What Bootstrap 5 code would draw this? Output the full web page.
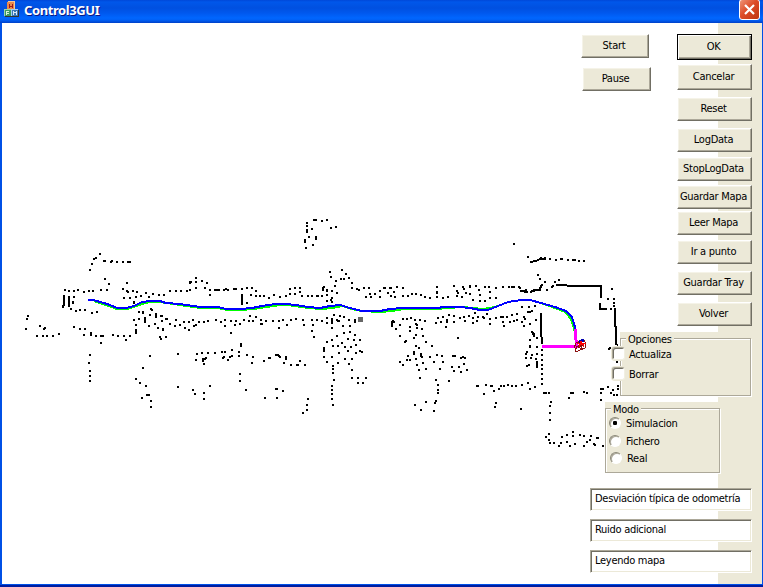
<!DOCTYPE html>
<html lang="es">
<head>
<meta charset="utf-8">
<meta name="viewport" content="width=device-width, initial-scale=1">
<title>Control3GUI</title>
<link href="https://cdn.jsdelivr.net/npm/bootstrap@5.3.0/dist/css/bootstrap.min.css" rel="stylesheet">
<style>
  html, body { height: 100%; overflow: hidden; }
  body { font: 11px/13px "DejaVu Sans Condensed", Tahoma, "DejaVu Sans", sans-serif; font-stretch: condensed; letter-spacing: -.27px; color: #000; }
  .win { width: 763px; height: 587px; background: #0050e6; }
  .titlebar { height: 23px; padding: 0 3px 0 4px; background: linear-gradient(#0048d8 0, #0057ea 2px, #0050e0 8px, #0058ee 13px, #0066ff 18px, #0060f6 20px, #0040c8 23px); }
  .titlebar .caption { font: bold 13px/20px "Noto Sans", "Open Sans", sans-serif; letter-spacing: -.4px; color: #fff; text-shadow: 1px 1px #0a1883; margin-left: 5px; }
  .app-icon { margin-top: 1px; }
  .close-btn { width: 21px; height: 21px; border: 1px solid #fff; border-radius: 3px; background: linear-gradient(135deg, #ee9377, #dd4c28 45%, #bf3511); padding: 0; margin-top: -1px; }
  .client { height: 561px; margin: 0 1px 0 2px; background: linear-gradient(90deg, #fff 716px, #ece9d8 716px); }
  .frame-foot { height: 3px; background: linear-gradient(#0050e6 33%, #001ea0 34%); }
  .map { left: -2px; top: -23px; pointer-events: none; }
  .controls { padding: 11px 10px 0 0; }
  .btn-xp { display: block; height: 24px; padding: 0 2px 1px 0; border: 1px solid; border-color: #fff #716f64 #716f64 #fff; border-radius: 0; background: #ece9d8; box-shadow: inset -1px -1px #aca899, inset 1px 1px #f5f3e8; font: inherit; letter-spacing: inherit; color: #000; white-space: nowrap; line-height: 20px; }
  .btn-xp:hover { background: #ece9d8; border-color: #fff #716f64 #716f64 #fff; color: #000; }
  .side { width: 75px; }
  .side .btn-xp { line-height: 22px; padding-bottom: 0; }
  .side .tall { height: 26px; line-height: 24px; }
  .side .btn-default { height: 26px; line-height: 24px; border-color: #000; box-shadow: inset 1px 1px #fff, inset -1px -1px #716f64, inset -2px -2px #aca899; }
  .left-col { width: 70px; margin-right: 26px; }
  .group-xp { background: #ece9d8; padding-top: 6px; }
  .group-xp > fieldset { border: 1px solid #aca899; box-shadow: 1px 1px #fff, inset 1px 1px #fff; padding: 0; margin: 0; min-width: 0; }
  .group-xp .ttl { background: #ece9d8; padding: 0 2px; margin-top: -6px; width: max-content; height: 13px; position: relative; }
  .opc { width: 131px; margin: 6px 1px 0 0; }
  .opc > fieldset { height: 58px; }
  .modo { width: 115px; margin: 6px 32px 0 0; }
  .modo > fieldset { height: 65px; }
  .check-xp { width: 13px; height: 13px; margin: -1px 0 1px; border: 1px solid; border-color: #aca899 #f1efe2 #f1efe2 #aca899; border-radius: 0; box-shadow: inset 1px 1px #716f64, 0 0 0 1px #ece9d8; background: #fff; flex: none; }
  .radio-xp { width: 12px; height: 12px; margin: -2px 1px 0 -1px; border: 1px solid; border-color: #8b8878 #fff #fff #8b8878; border-radius: 50%; background: #fff; flex: none; box-shadow: inset 1px 1px #aca899; }
  .radio-xp:checked { border-color: #8b8878 #fff #fff #8b8878; background: radial-gradient(circle, #000 2px, #fff 2.4px); }
  .edit-xp { width: 162px; height: 23px; padding: 0 0 3px 4px; border: 1px solid; border-color: #aca899 #fff #fff #aca899; border-radius: 0; box-shadow: inset 1px 1px #716f64, inset -1px -1px #ece9d8; background: #fff; font: inherit; letter-spacing: -.29px; color: #000; }
</style>
<script src="https://cdn.jsdelivr.net/npm/bootstrap@5.3.0/dist/js/bootstrap.bundle.min.js"></script>
</head>
<body>
<div class="win d-flex flex-column">
  <header class="titlebar d-flex align-items-start">
    <svg width="15" height="16" viewBox="0 0 15 16" class="app-icon" shape-rendering="crispEdges">
      <path d="M3 1h7v8H3z" fill="#e8894a"/><path d="M4 0h7v1H4zM10 1h1v7h-1z" fill="#f8c898"/>
      <path d="M5 3h1v4H5zM8 3h1v4H8zM6 4.500h2v1H6z" fill="#a01818"/>
      <path d="M0 8h7v7H0z" fill="#3d9a62"/><path d="M0 8h7v1H0zM0 8h1v7H0z" fill="#9cd4a8"/><path d="M2 10h3v1H3v1h2v1H3v1H2z" fill="#d8f0dc"/>
      <path d="M7 8h7v7H7z" fill="#3b78b8"/><path d="M7 8h7v1H7zM7 8h1v7H7z" fill="#a8cff0"/><path d="M9 10h1v4H9zM12 10h1v4h-1zM10 11h2v1h-2z" fill="#d8e8f8"/>
      <path d="M14 9h1v6h-1zM1 15h14v1H1z" fill="#333"/>
    </svg>
    <span class="caption">Control3GUI</span>
    <button class="close-btn ms-auto d-flex align-items-center justify-content-center" aria-label="Cerrar">
      <svg width="13" height="13" viewBox="0 0 13 13"><path d="M2 2l9 9M11 2l-9 9" stroke="#fff" stroke-width="2.200"/></svg>
    </button>
  </header>

  <main class="client position-relative">
    <svg class="map position-absolute" width="720" height="584" viewBox="0 0 720 584" shape-rendering="crispEdges" fill="none">
      <path id="dots" stroke="#000" stroke-width="2" stroke-linecap="square"/>
      <g stroke="#000" stroke-width="2">
        <path d="M64 295v8l-1 5M69 296v11M242 294v11M541 313v16l1 15"/>
        <path d="M530 262l6-1 4-2h6M520 291h5M526 292v-2M531 291l4-1h5l1-5M556 285h10l2 1h33v11l1 1M600 303v6h7M615 308v16l1 5v15l2 1M532 332l2 3M534 333v3M537 361v7"/>
      </g>
      <rect x="358" y="317" width="5" height="5" fill="#666"/>
      <path stroke="#0f0" stroke-width="2" d="M94 301L117 309H127L134 307 142 304 150 302 160 302 180 305 200 308H218L228 310 240 310 254 309 266 307 280 305H288L308 308 322 309 332 308 342 306 352 309 362 311 380 312 392 311 404 309 436 309 448 308 462 307 474 308 482 309 490 308 498 306 508 302 521 300 530 300 541 303 555 308 565 312 571 319 574 328V331"/>
      <path stroke="#00f" stroke-width="2" d="M88 300H93L104 303 110 305 117 308H126L134 306 142 302 150 301 160 301 166 303 180 304 200 307H218L226 309H240L252 308 262 306 275 304 285 304 296 305 308 307 320 308 330 306 340 305 350 308 358 310 362 311H380L390 309 402 308H436L445 307H460L470 308 480 310H488L498 306 508 302 521 300H530L541 303 555 307 566 311 572 317 575 327V330"/>
      <path stroke="#f0f" stroke-width="3" d="M575.500 329v8l1.500 9.500H542"/>
      <path d="M574 348l2-5 4-2 4-1 2 4-1 4-5 2-4 2-1-2 3-4 5-1M576 346l6 3M578 342l4 6M575 349l7-6" stroke="#8b1010"/>
      <path d="M579 340h2v-1h3v3h-3v1h-2z" fill="#0000b0"/>
      <path d="M580 341h2v2h4v1h-2v3h-1v-2h-3v2h-1v-3h-2v-1h3z" fill="#f00"/>
    </svg>

    <div class="controls position-relative d-flex flex-column align-items-end">
      <div class="d-flex align-items-start">
        <div class="left-col">
          <button class="btn btn-xp" style="width:68px">Start</button>
          <button class="btn btn-xp" style="width:69px;margin:9px 0 0 1px">Pause</button>
        </div>
        <div class="side">
          <button class="btn btn-xp btn-default w-100">OK</button>
          <button class="btn btn-xp tall w-100" style="margin-top:4px">Cancelar</button>
          <button class="btn btn-xp w-100" style="margin-top:7px">Reset</button>
          <button class="btn btn-xp w-100" style="margin-top:7px">LogData</button>
          <button class="btn btn-xp w-100" style="margin-top:5px">StopLogData</button>
          <button class="btn btn-xp w-100" style="margin-top:4px">Guardar Mapa</button>
          <button class="btn btn-xp w-100" style="margin-top:2px">Leer Mapa</button>
          <button class="btn btn-xp w-100" style="margin-top:5px">Ir a punto</button>
          <button class="btn btn-xp w-100" style="margin-top:7px">Guardar Tray</button>
          <button class="btn btn-xp w-100" style="margin-top:7px">Volver</button>
        </div>
      </div>

      <section class="group-xp opc">
        <fieldset>
          <div class="ttl" style="margin-left:5px">Opciones</div>
          <label class="d-flex align-items-center" style="margin:2px 0 0 -9px"><input type="checkbox" class="form-check-input check-xp"><span style="margin-left:4px">Actualiza</span></label>
          <label class="d-flex align-items-center" style="margin:7px 0 0 -9px"><input type="checkbox" class="form-check-input check-xp"><span style="margin-left:4px">Borrar</span></label>
        </fieldset>
      </section>

      <section class="group-xp modo">
        <fieldset>
          <div class="ttl" style="margin-left:5px">Modo</div>
          <label class="d-flex align-items-center" style="margin:1px 0 0 4px"><input type="radio" name="modo" checked class="form-check-input radio-xp"><span style="margin-left:4px">Simulacion</span></label>
          <label class="d-flex align-items-center" style="margin:5px 0 0 4px"><input type="radio" name="modo" class="form-check-input radio-xp"><span style="margin-left:4px">Fichero</span></label>
          <label class="d-flex align-items-center" style="margin:4px 0 0 5px"><input type="radio" name="modo" class="form-check-input radio-xp"><span style="margin-left:4px">Real</span></label>
        </fieldset>
      </section>

      <input class="form-control edit-xp" style="margin-top:15px" value="Desviación típica de odometría">
      <input class="form-control edit-xp" style="margin-top:8px" value="Ruido adicional">
      <input class="form-control edit-xp" style="margin-top:8px" value="Leyendo mapa">
    </div>
  </main>
  <div class="frame-foot"></div>
</div>

<script>
  // Laser scan points, in thirds of a pixel from each sector's origin.
  const sectors = [
    [0, 210, `300 132 288 144 282 147 276 162 270 180 312 153 315 153 336 153 333 156 351 156 369 156 384 156 390 156
      315 207 327 222 381 219 195 240 207 243 222 243 234 240 252 246 267 243 279 243 303 240 321 240 369 237 381 243 384 246 399 243 411 246
      438 249 459 252 477 255 492 255 510 243 528 243 372 264 390 264 408 261 423 258 447 261 402 276 402 279 222 261 219 276 219 279
      213 297 228 303 240 300 255 300 276 309 291 306 84 318 81 327 78 357 120 348 135 354 132 357 111 378 129 378 141 378 159 378 177 372
      222 351 240 357 255 357 252 375 273 369 273 375 288 378 303 378 309 378 303 399 339 375 354 378 372 378 378 390 390 378
      408 360 408 366 408 369 408 345 402 330 417 327 417 306 429 306 429 309 435 324 435 330 435 336 450 315 453 297 456 300
      468 312 468 318 468 321 483 318 486 318 486 333 498 327 501 327 465 342 447 348 474 354 489 357 489 360 510 342 525 348 528 330
      480 381 483 387 498 381 270 435 267 459 270 483 270 498 270 513 450 438 429 474 534 432 408 507 420 519 438 528 441 555 447 555 426 564 453 573 453 591 534 531`],
    [180, 210, `402 30 408 30 426 33 441 30 381 39 381 48 381 60 381 66 396 57 453 54 468 51 387 81 408 81 408 87 375 90 375 96 399 105 378 114
      486 180 498 192 450 186 453 201 468 213 483 207 492 207 507 204 516 219 465 228 471 249 456 243 432 231 429 234 429 240 441 240 441 243
      30 216 33 216 30 219 48 216 66 213 81 219 3 243 21 243 30 240 48 234 75 234 90 240 105 240 111 240 117 240 132 240 138 237 144 240 162 237 168 237 186 237 201 234 216 234
      228 243 90 255 213 255 228 258 240 258 252 258 267 264 282 255 300 261 318 258 330 237 345 234 360 234 360 246 330 252 345 252 366 258 384 258 396 258 411 258 414 258 426 258
      441 255 456 264 453 270 456 276 441 273 516 234 531 237 537 240 201 279 48 204
      12 336 27 336 39 330 57 336 72 336 84 333 108 330 123 336 135 330 153 333 168 333 192 330 210 318 228 321 207 333 219 333 243 330 258 333 279 333 297 333 309 330 333 330 348 327 369 330 396 330 411 330 426 333
      0 345 15 354 27 360 42 348 48 345 135 348 165 345 180 342 243 342 246 342 297 354 321 345 372 345 399 345 396 363 402 381 153 369
      441 324 441 339 462 315 480 318 492 321 456 327 456 333 456 339 456 354 471 330 474 333 477 333 507 330 525 330 525 336 489 348 510 348
      492 369 510 366 471 378 525 375 456 390 441 396 504 387 522 390 486 399 459 408 474 408 495 411 513 411 528 405 432 414 432 420 432 423 477 429 504 423 528 429
      432 441 456 441 441 456 474 459 495 447 516 447 507 462 459 468 459 477 459 489 516 480 516 504 534 504 534 519 462 510 456 528 456 540 456 552 456 567 459 585
      183 402 183 408 156 420 177 426 126 426 135 426 105 429 84 429 66 429 51 432 132 441 129 444 150 441 156 438 177 438 144 450 201 435 219 441 216 459
      48 450 69 447 75 447 78 444 69 453 72 462 252 453 267 444 270 444 288 435 294 435 297 438 300 441 318 441 318 447 312 459 333 465 351 465 354 465 360 453 375 465
      180 492 180 513 198 540 90 528 39 540 45 552 72 549 72 567 288 537 291 537 309 543 255 564 291 564 384 567 381 585 381 600 369 609`],
    [180, 210, `552 234 567 234 570 252 585 252 558 261 573 261 540 390 540 423 546 426 558 504 549 519`],
    [360, 230, `12 174 27 174 72 174 75 174 90 174 93 174 111 171 129 174 60 183 30 192 45 192 84 189 102 186 18 201 33 201 60 201 93 198 105 201 129 198 144 198 156 192 168 192 183 195 195 201 210 204
      231 171 231 186 231 189 231 201 249 204 264 201 282 168 291 183 294 189 291 198 309 171 312 177 318 189 306 201 330 168 330 171 330 192 348 168 357 180 339 210
      99 273 96 276 102 276 96 282 96 288 108 297 120 285 129 267 141 267 153 264 165 270 150 291 150 303 168 282 171 285 171 294 180 270 195 273 186 297
      234 264 249 261 267 255 282 258 228 279 243 276 261 270 261 276 258 291 282 276 300 264 312 261 315 273 327 258 339 264 354 261 339 279 351 273 345 249
      120 318 138 333 135 336 162 324 168 315 189 318 198 336 168 348 177 354 216 348 294 324 162 366 162 372 144 378 141 390 150 390 120 396 129 405 168 387 183 372 183 378 186 381 189 399 171 405 177 420 198 417
      210 381 222 396 231 375 246 378 249 396 240 417 279 378 285 378 303 384 309 381 315 384 276 411 297 411 312 402 282 423 303 426 321 420 180 444 267 453 228 450 234 465 234 480 234 489 228 513 225 519 198 516 165 525 183 540 222 543 354 468 351 468`],
    [360, 230, `375 171 387 171 408 174 429 171 447 171 390 186 360 195 390 204 408 204 360 213 375 213 381 252
      369 261 372 264 378 465 393 468 396 468 372 492 402 483 417 477 423 468 432 468 408 519 405 531`],
    [480, 230, `102 42 144 81 183 84 195 84 210 87 228 90 243 87 246 87 264 90 279 90 285 90 297 93 312 93 174 135 180 147 195 156 186 165 183 171 225 156 237 150 219 168 216 171 201 180
      30 186 96 171 102 171 117 171 120 174 123 183 135 186 138 180 141 186 153 186 162 183
      396 177 363 180 363 186 363 195 384 207 402 207 402 219 402 228 393 237 405 237 378 237
      126 231 147 231 165 228 144 246 150 246 156 243 30 267 48 264 63 261 69 261 81 261 96 255 111 252 30 282 72 288 69 276 90 276 102 273 111 270 132 261 135 267 126 276 132 288 150 282 168 270
      156 306 159 312 162 318 150 330 171 324 150 348 150 351 171 351 141 366 138 372 156 375 171 372 138 384 153 384 168 387 141 408 147 405
      186 360 186 375 186 390 186 405 186 417 186 432 186 447 186 462 84 465 96 468 108 468 126 465 144 459 150 477 165 471 123 537
      192 489 198 489 207 489 213 516 210 528 210 549 210 570 273 489 279 489 267 504 312 486 321 489 363 477 369 477 384 471 363 489 363 510 393 489 399 480 402 495 414 468 414 477 411 495
      390 354 387 357 411 396 207 612 198 621 207 630 210 639 222 639 279 606 279 618 246 621 261 615 300 615 312 618 333 618 330 630 321 636 351 624 354 624 243 639 261 636 237 648 270 648 285 642 312 648 342 642 345 645 369 648`]
  ];
  let d = '';
  for (const [ox, oy, list] of sectors) {
    const n = list.trim().split(/\s+/).map(Number);
    for (let i = 0; i < n.length; i += 2) {
      d += `M${ox + Math.round(n[i] / 3)} ${oy + Math.round(n[i + 1] / 3)}h0`;
    }
  }
  document.getElementById('dots').setAttribute('d', d);
</script>
</body>
</html>
